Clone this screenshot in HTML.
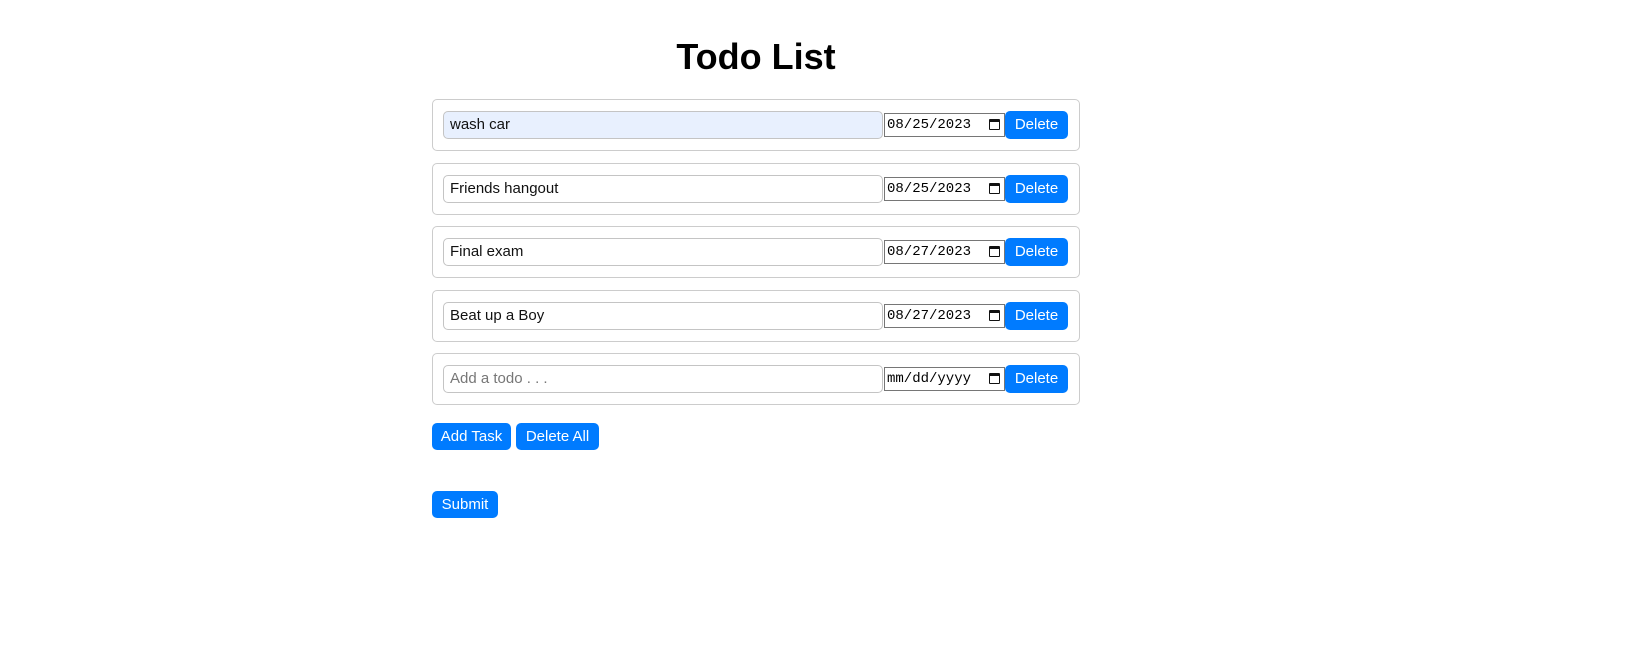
<!DOCTYPE html>
<html><head><style>
body{margin:0;background:#fff;font-family:"Liberation Sans",Arial,sans-serif;width:1631px;height:648px;position:relative;overflow:hidden}
h1{position:absolute;left:0;width:1512px;text-align:center;top:36px;margin:0;font-size:36px;font-weight:bold;color:#000}
.row{position:absolute;left:432px;width:646px;height:50px;border:1px solid #ccc;border-radius:5px}
.t{position:absolute;left:10px;top:11px;border:1px solid #c4c4c4;border-radius:5px;box-sizing:border-box;width:440px;height:28px;font-size:15px;line-height:26px;padding-left:6px;color:#111}
.t.ph{color:#777}
.d{position:absolute;left:451px;top:13px;width:121px;height:24px;box-sizing:border-box;border:1px solid #767676;font-family:"Liberation Mono",monospace;font-size:14px;line-height:22px;padding-left:2px;color:#000}
.d i{position:absolute;right:4px;top:5px;width:11px;height:11px;border:1.5px solid #111;border-top-width:3px;box-sizing:border-box;border-radius:1px}
.b{position:absolute;background:#007bff;color:#fff;border-radius:5px;font-size:15px;text-align:center;line-height:27px;height:27px}
.row .b{left:572px;top:11px;width:63px;height:28px;line-height:28px}
</style></head><body>
<h1>Todo List</h1>
<div class="row" style="top:99px"><div class="t" style="background:#e8f0fe">wash car</div><div class="d">08/25/2023<i></i></div><div class="b">Delete</div></div>
<div class="row" style="top:163px"><div class="t">Friends hangout</div><div class="d">08/25/2023<i></i></div><div class="b">Delete</div></div>
<div class="row" style="top:226px"><div class="t">Final exam</div><div class="d">08/27/2023<i></i></div><div class="b">Delete</div></div>
<div class="row" style="top:290px"><div class="t">Beat up a Boy</div><div class="d">08/27/2023<i></i></div><div class="b">Delete</div></div>
<div class="row" style="top:353px"><div class="t ph">Add a todo . . .</div><div class="d">mm/dd/yyyy<i></i></div><div class="b">Delete</div></div>
<div class="b" style="left:432px;top:423px;width:79px">Add Task</div>
<div class="b" style="left:516px;top:423px;width:83px">Delete All</div>
<div class="b" style="left:432px;top:491px;width:66px">Submit</div>
</body></html>
